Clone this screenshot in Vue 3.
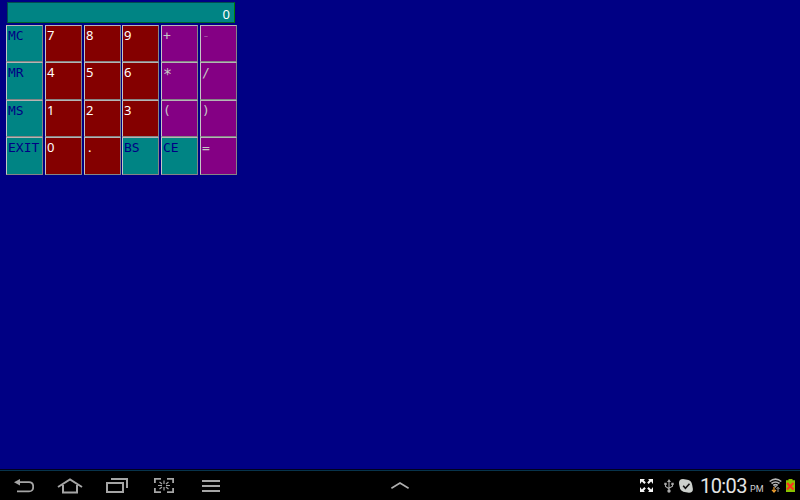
<script setup>
const rows = [
  ['MC', '7', '8', '9', '+', '-'],
  ['MR', '4', '5', '6', '*', '/'],
  ['MS', '1', '2', '3', '(', ')'],
  ['EXIT', '0', '.', 'BS', 'CE', '=']
]
const kind = (k) => (/^[0-9.]$/.test(k) ? 'digit' : /^[A-Z]+$/.test(k) ? 'command' : 'operator')
const accent = { '.': 'point', '-': 'minus', '*': 'times' }
</script>

<template>
  <div class="screen">
    <main class="calculator">
      <div class="display"><span>0</span></div>
      <div class="keys">
        <template v-for="row in rows">
          <button v-for="k in row" :key="k" :class="['key', kind(k), accent[k]]">{{ k }}</button>
        </template>
      </div>
    </main>
    <footer class="bar">
      <div class="nav">
        <svg width="20" height="14" viewBox="0 0 20 14"><path d="M4 3.2H15Q19.2 3.2 19.2 7.8T15 12.4H3" fill="none" stroke="#a5a5a5" stroke-width="1.8"/><path d="M0 3.2 6 0v6.6z" fill="#a5a5a5"/></svg>
        <svg class="home" width="26" height="16" viewBox="0 0 26 16"><path d="M1 9 13 1.5 25 9M6 7v7.4h14V7" fill="none" stroke="#a5a5a5" stroke-width="2"/></svg>
        <svg class="recent" width="22" height="15" viewBox="0 0 22 15"><path d="M1 5h16v9H1z" fill="none" stroke="#a5a5a5" stroke-width="2"/><path d="M5 1h16v9" fill="none" stroke="#a5a5a5" stroke-width="2"/></svg>
        <svg class="capture" width="20" height="15" viewBox="0 0 20 15"><path d="M.9 5V.9H7M13 .9h6.1V5M.9 10v4.1H7M13 14.1h6.1V10" fill="none" stroke="#a5a5a5" stroke-width="1.8"/><path d="M10 2.5V6M10 9v3.5M4 7.5h4M12 7.5h4M5.5 4 8 6M14.5 4 12 6M5.5 11 8 9M14.5 11 12 9" stroke="#a5a5a5" stroke-width="1.2"/></svg>
        <svg class="menu" width="18" height="12" viewBox="0 0 18 12"><path d="M0 1h18M0 6h18M0 11h18" stroke="#a5a5a5" stroke-width="2"/></svg>
      </div>
      <svg class="up" width="18" height="7" viewBox="0 0 18 7"><path d="M.4 6.2 9 1l8.6 5.2" fill="none" stroke="#b0b0b0" stroke-width="1.6"/></svg>
      <div class="status">
        <svg width="13" height="13" viewBox="0 0 13 13"><path d="M0 0h5L3.7 1.3l2.1 2.1-1.5 1.5-2.4-2.4L0 5zM13 0v5l-1.9-2.5-2.4 2.4-1.5-1.5 2.1-2.1L8 0zM0 13V8l1.9 2.5 2.4-2.4 1.5 1.5-2.1 2.1L5 13zM13 13H8l1.3-1.3-2.1-2.1 1.5-1.5 2.4 2.4L13 8z" fill="#f4f4f4"/></svg>
        <svg class="usb" width="10" height="14" viewBox="0 0 10 14"><path d="M5 2v10M1.5 4.5v3L5 9.8M8.5 4.5v2.7L5 9.2" fill="none" stroke="#aaa" stroke-width="1.1"/><path d="m5 0 2 3H3zM.3 3.7h2.4v2.2H.3zM7.3 3.7h2.4v2.2H7.3z" fill="#aaa"/><circle cx="5" cy="12" r="1.7" fill="#aaa"/></svg>
        <svg class="check" width="14" height="14" viewBox="0 0 14 14"><path d="M4 0q2 0 3 .4Q12.6.5 13.2 6l.7 4Q14 13.8 10 13.8L7 13.3Q1 13 .5 7 0 5 0 3.8 0 .3 4 0z" fill="#ccd0cc"/><path d="m4.2 6.8 2.2 2.4 4.1-4.4" fill="none" stroke="#111" stroke-width="1.6"/></svg>
        <span class="time">10:03</span><span class="pm">PM</span>
        <svg class="wifi" width="13" height="15" viewBox="0 0 13 15"><path d="M.7 3.5Q6.5-1.2 12.3 3.5M2.5 5.5q4-3.1 8 0M4.3 7.5q2.2-1.7 4.4 0" fill="none" stroke="#b5b5b5" stroke-width="1.6"/><path d="m5 8 1.5 2L8 8z" fill="#aaa"/><path d="M5 9v5M3 11.8 5 14l2-2.2" stroke="#f0a030" fill="none" stroke-width="1.2"/><path d="M9 14V9.5M7.5 11 9 9.3l1.5 1.7" stroke="#999" fill="none"/></svg>
        <svg class="battery" width="9" height="14" viewBox="0 0 9 14"><path d="M2.5 0h4v1.3H9V13H0V1.3h2.5z" fill="#8ac400"/><path d="m1 4 6.5 6.5m0-6.5L1 10.5" stroke="#ff3020" stroke-width="2.2"/></svg>
      </div>
    </footer>
  </div>
</template>

<style>
body { margin: 0; background: #000084; }
</style>
<style scoped>
.screen { width: 800px; height: 500px; display: flex; flex-direction: column; background: #000084; overflow: hidden; }
.calculator { flex: 1; padding: 2px 0 0 6px; }
.display { box-sizing: border-box; width: 228px; height: 21px; margin: 0 0 2px 1px; padding: 2px 4px 0 0; background: #008484; border: 1px solid #004c50; border-right-color: #008000; border-bottom-color: #006428; color: #fff; text-align: right; font: 13px/19px "Noto Sans", sans-serif; }
.keys { display: grid; grid-template-columns: 39px 39px 38px 39px 39px 37px; grid-template-rows: 37px 38px 37px 38px; }
.key { box-sizing: border-box; width: 37px; margin: 0; padding: 0 0 0 1px; border: 1px solid; border-color: #b5b5b5 #858585 #858585 #c5c5c5; border-radius: 0; display: flex; align-items: flex-start; text-align: left; white-space: nowrap; font: 13px/18px "Noto Sans", sans-serif; }
.digit { background: #840000; color: #fff; }
.command { padding-top: 1px; background: #008484; color: #000084; font: 13px/18px "DejaVu Sans Mono", monospace; }
.operator { padding-top: 1px; background: #840084; color: #c6c6c6; font: 13px/18px "DejaVu Sans Mono", monospace; }
.point { padding-left: 3px; }
.minus { color: #a34ca3; }
.times { padding-top: 3px; font-size: 15px; }
.bar { box-sizing: border-box; height: 30px; background: #000; border-top: 1px solid #07334b; display: grid; grid-template-columns: 390px 20px 1fr; align-items: center; box-shadow: 0 -1px #000020; }
.bar svg { display: block; flex: none; }
.nav { display: flex; align-items: center; padding-left: 14px; }
.home { margin-left: 23px; }
.recent { margin-left: 23px; }
.capture { margin-left: 26px; }
.menu { margin-left: 28px; }
.up { margin-left: 1px; }
.status { display: flex; align-items: center; padding-left: 230px; }
.usb { margin-left: 11px; }
.check { margin-left: 5px; }
.time { width: 50px; margin-left: 7px; color: #e4e4e4; font: 20px/28px Roboto, sans-serif; letter-spacing: -0.6px; white-space: nowrap; }
.pm { width: 14px; padding-top: 7px; color: #d0d0d0; font: 9px/12px Roboto, sans-serif; }
.wifi { margin-left: 5px; }
.battery { margin-left: 4px; }
</style>
